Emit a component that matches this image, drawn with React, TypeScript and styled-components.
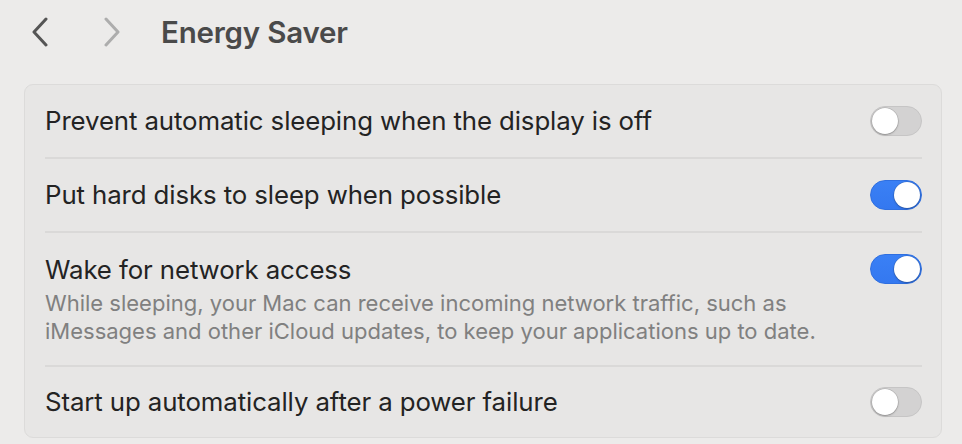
import React, { useState } from "react";
import styled, { createGlobalStyle } from "styled-components";

const Global = createGlobalStyle`
  html, body { margin: 0; padding: 0; background: #ecebea; }
  body { font-family: Inter, "Noto Sans", sans-serif; -webkit-font-smoothing: antialiased; }
`;

const Page = styled.div`
  width: 962px;
  height: 444px;
  background: #ecebea;
  box-sizing: border-box;
  padding: 0 20px 0 24px;
  overflow: hidden;
`;

const Toolbar = styled.div`
  height: 62px;
  display: flex;
  align-items: center;
  padding-left: 7px;
  padding-top: 1px;
`;

const NavButton = styled.button<{ $disabled?: boolean }>`
  border: 0;
  background: none;
  padding: 0;
  width: 18px;
  height: 30px;
  display: flex;
  align-items: center;
  justify-content: center;
  color: ${(p) => (p.$disabled ? "#adadad" : "#555555")};
  margin-right: ${(p) => (p.$disabled ? "40px" : "54px")};
`;

const Title = styled.h1`
  margin: 0;
  font-size: 29.5px;
  font-weight: 600;
  color: #4a4a4a;
  letter-spacing: -0.2px;
`;

const Card = styled.div`
  margin-top: 21px;
  background: #e7e6e5;
  border: 1px solid #dcdbda;
  border-radius: 9px;
  padding: 0 19px 0 20px;
`;

const Row = styled.div<{ $first?: boolean; $tall?: boolean; $last?: boolean }>`
  display: flex;
  align-items: ${(p) => (p.$tall ? "flex-start" : "center")};
  justify-content: space-between;
  border-top: ${(p) => (p.$first ? "0" : "2px solid #dad9d8")};
  padding: ${(p) => (p.$tall ? "21px 0 20px" : p.$last ? "19px 0 19px" : "20px 0")};
  min-height: 32px;
`;

const TextBlock = styled.div`
  display: flex;
  flex-direction: column;
`;

const Label = styled.div`
  font-size: 25.8px;
  line-height: 32px;
  color: #232323;
  letter-spacing: -0.1px;
`;

const Description = styled.div`
  margin-top: 3px;
  font-size: 22px;
  line-height: 28px;
  color: #808080;
  letter-spacing: 0;
`;

const Track = styled.button<{ $on: boolean }>`
  position: relative;
  flex: none;
  width: 52px;
  height: 30px;
  border-radius: 15px;
  padding: 0;
  cursor: pointer;
  border: 1px solid ${(p) => (p.$on ? "#2f6fe0" : "#c6c5c5")};
  background: ${(p) =>
    p.$on ? "linear-gradient(180deg, #3a80f5 0%, #3478f0 100%)" : "#d3d2d2"};
`;

const Knob = styled.span<{ $on: boolean }>`
  position: absolute;
  top: 1px;
  left: ${(p) => (p.$on ? "23px" : "1px")};
  width: 26px;
  height: 26px;
  border-radius: 50%;
  background: #ffffff;
  box-shadow: 0 0 0 0.5px rgba(0, 0, 0, 0.18), 0 1px 2px rgba(0, 0, 0, 0.25);
`;

const Chevron = ({ dir }: { dir: "left" | "right" }) => (
  <svg width="18" height="30" viewBox="0 0 18 30" fill="none">
    <path
      d={dir === "left" ? "M15 2 L3 15 L15 28" : "M3 2 L15 15 L3 28"}
      stroke="currentColor"
      strokeWidth="3"
      strokeLinecap="round"
      strokeLinejoin="round"
    />
  </svg>
);

const Toggle = ({ initial }: { initial: boolean }) => {
  const [on, setOn] = useState(initial);
  return (
    <Track $on={on} onClick={() => setOn(!on)} aria-pressed={on}>
      <Knob $on={on} />
    </Track>
  );
};

export default function App() {
  return (
    <>
      <Global />
      <Page>
        <Toolbar>
          <NavButton aria-label="Back">
            <Chevron dir="left" />
          </NavButton>
          <NavButton $disabled aria-label="Forward">
            <Chevron dir="right" />
          </NavButton>
          <Title>Energy Saver</Title>
        </Toolbar>
        <Card>
          <Row $first>
            <Label>Prevent automatic sleeping when the display is off</Label>
            <Toggle initial={false} />
          </Row>
          <Row>
            <Label>Put hard disks to sleep when possible</Label>
            <Toggle initial={true} />
          </Row>
          <Row $tall>
            <TextBlock>
              <Label>Wake for network access</Label>
              <Description>
                While sleeping, your Mac can receive incoming network traffic, such as
                <br />
                iMessages and other iCloud updates, to keep your applications up to date.
              </Description>
            </TextBlock>
            <Toggle initial={true} />
          </Row>
          <Row $last>
            <Label>Start up automatically after a power failure</Label>
            <Toggle initial={false} />
          </Row>
        </Card>
      </Page>
    </>
  );
}
